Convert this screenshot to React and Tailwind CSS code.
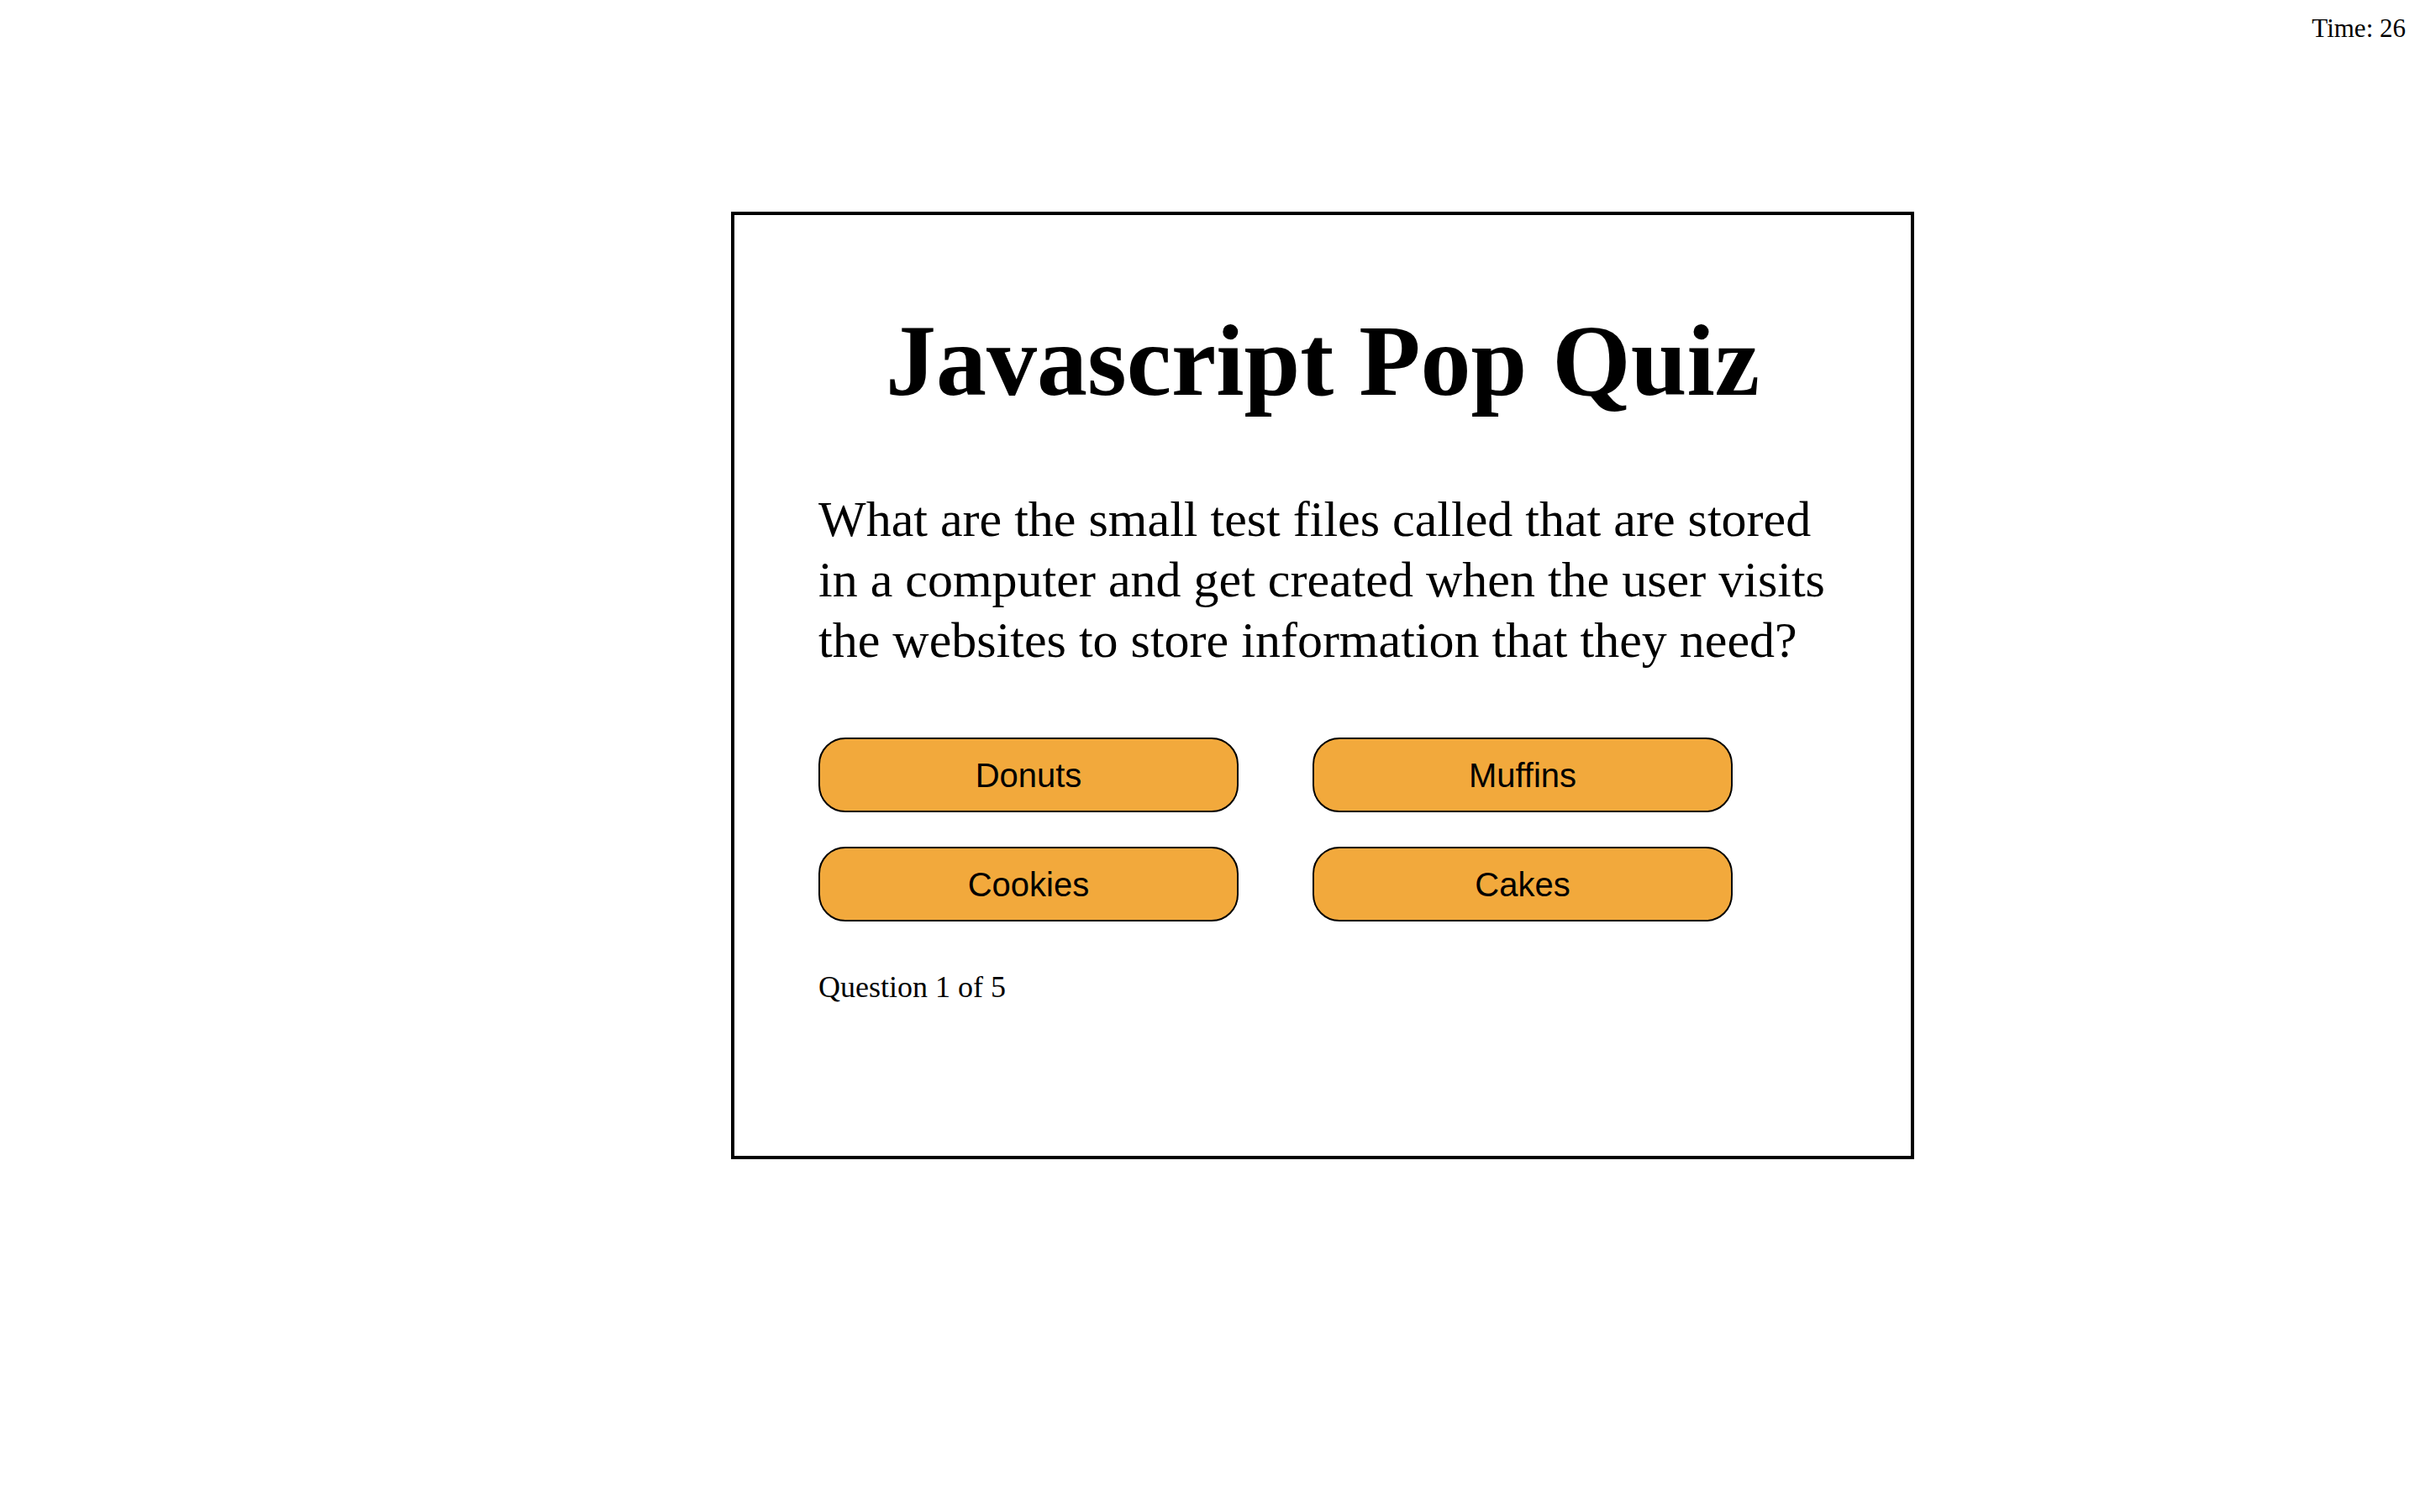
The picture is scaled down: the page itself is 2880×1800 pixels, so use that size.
export default function App() {
  const answers = ["Donuts", "Muffins", "Cookies", "Cakes"];
  return (
    <div className="min-h-screen bg-white text-black font-['Liberation_Serif','Times_New_Roman',serif]">
      <div className="flex justify-end pr-[17px] pt-[18px]">
        <span className="text-[31px] leading-[31px]">Time: 26</span>
      </div>
      <div className="ml-[870px] mt-[203px] w-[1408px] h-[1128px] border-4 border-black px-[100px] pt-[114px]">
        <h1 className="text-center text-[120px] leading-[120px] font-bold">Javascript Pop Quiz</h1>
        <p className="mt-[92px] w-[1212px] text-[60px] leading-[72px]">
          What are the small test files called that are stored in a computer and get created when the user visits the websites to store information that they need?
        </p>
        <div className="mt-[80px] grid grid-cols-[500px_500px] gap-x-[88px] gap-y-[41px]">
          {answers.map((a) => (
            <button
              key={a}
              className="h-[89px] rounded-[32px] border-2 border-black bg-[#f2a93c] text-[40px] font-['Liberation_Sans',Arial,sans-serif] text-black flex items-center justify-center"
            >
              {a}
            </button>
          ))}
        </div>
        <p className="mt-[60px] text-[36px] leading-[36px]">Question 1 of 5</p>
      </div>
    </div>
  );
}
